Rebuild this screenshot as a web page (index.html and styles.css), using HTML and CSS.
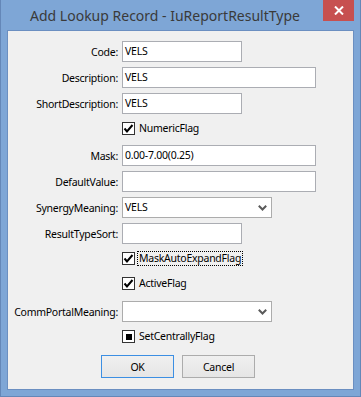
FILE: index.html
```html
<!DOCTYPE html>
<html lang="en">
  <head>
    <meta charset="UTF-8" />
    <title>Add Lookup Record - IuReportResultType</title>
    <link rel="stylesheet" href="styles.css">
  </head>
  <body>
    <div class="window">
      <div class="titlebar">
        <div class="title">Add Lookup Record - IuReportResultType</div>
        <div class="close">
          <svg width="10" height="9" viewBox="0 0 10 9">
            <path d="M1 0.5 L9 8.5 M9 0.5 L1 8.5" stroke="#fff" stroke-width="2" fill="none" />
          </svg>
        </div>
      </div>

      <div class="client">
        <div class="form">
          <div class="row">
            <span class="label">Code:</span>
            <div class="field short">VELS</div>
          </div>
          <div class="row">
            <span class="label">Description:</span>
            <div class="field long">VELS</div>
          </div>
          <div class="row">
            <span class="label">ShortDescription:</span>
            <div class="field short">VELS</div>
          </div>
          <div class="row check-row mt-8">
            <span class="box">
              <svg width="11" height="11" viewBox="0 0 11 11">
                <path d="M1.5 5.5 L4 8.5 L9.5 2" stroke="#000" stroke-width="2" fill="none" />
              </svg>
            </span>
            <span class="check-label">NumericFlag</span>
          </div>
          <div class="row mt-10">
            <span class="label">Mask:</span>
            <div class="field long">0.00-7.00(0.25)</div>
          </div>
          <div class="row">
            <span class="label">DefaultValue:</span>
            <div class="field long"></div>
          </div>
          <div class="row">
            <span class="label">SynergyMeaning:</span>
            <div class="field combo">
              <span>VELS</span>
              <svg class="arrow" width="9" height="6" viewBox="0 0 9 6">
                <path d="M0.8 0.8 L4.5 4.5 L8.2 0.8" stroke="#5a5a5a" stroke-width="2" fill="none" />
              </svg>
            </div>
          </div>
          <div class="row">
            <span class="label">ResultTypeSort:</span>
            <div class="field short"></div>
          </div>
          <div class="row check-row mt-8">
            <span class="box">
              <svg width="11" height="11" viewBox="0 0 11 11">
                <path d="M1.5 5.5 L4 8.5 L9.5 2" stroke="#000" stroke-width="2" fill="none" />
              </svg>
            </span>
            <span class="check-label focused">MaskAutoExpandFlag</span>
          </div>
          <div class="row check-row mt-12">
            <span class="box">
              <svg width="11" height="11" viewBox="0 0 11 11">
                <path d="M1.5 5.5 L4 8.5 L9.5 2" stroke="#000" stroke-width="2" fill="none" />
              </svg>
            </span>
            <span class="check-label">ActiveFlag</span>
          </div>
          <div class="row mt-11">
            <span class="label">CommPortalMeaning:</span>
            <div class="field combo">
              <span></span>
              <svg class="arrow" width="9" height="6" viewBox="0 0 9 6">
                <path d="M0.8 0.8 L4.5 4.5 L8.2 0.8" stroke="#5a5a5a" stroke-width="2" fill="none" />
              </svg>
            </div>
          </div>
          <div class="row check-row mt-8">
            <span class="box"><span class="mixed"></span></span>
            <span class="check-label">SetCentrallyFlag</span>
          </div>
        </div>

        <div class="buttons">
          <button class="btn default">OK</button>
          <button class="btn">Cancel</button>
        </div>
      </div>
    </div>
  </body>
</html>
```

FILE: styles.css
```css
* {
  box-sizing: border-box;
  margin: 0;
  padding: 0;
}

body {
  width: 361px;
  height: 397px;
  background-color: #7ea6d6;
  font-family: "Noto Sans", "Open Sans", Arial, sans-serif;
  font-size: 10.5px;
  letter-spacing: -0.25px;
  color: #000;
}

.window {
  width: 361px;
  height: 397px;
  background-color: #7ea6d6;
  border: 1px solid #6487b8;
  border-top: none;
  padding: 0 6px 6px 6px;
  display: flex;
  flex-direction: column;
}

.titlebar {
  height: 30px;
  display: flex;
  align-items: flex-start;
}

.title {
  flex: 1;
  text-align: center;
  font-size: 14px;
  letter-spacing: 0;
  line-height: 31px;
  color: #3a3a3a;
  white-space: nowrap;
}

.close {
  width: 31px;
  height: 21px;
  background-color: #c75050;
  display: flex;
  justify-content: center;
  align-items: center;
}

.client {
  flex: 1;
  background-color: #f0f0f0;
  border: 1px solid #6b8fc1;
}

.form {
  padding-top: 10px;
}

.row {
  display: flex;
  align-items: center;
  height: 21px;
  margin-top: 5px;
}

.row:first-child {
  margin-top: 0;
}

.row.check-row {
  height: 13px;
  padding-left: 114px;
}

.mt-8 { margin-top: 8px; }
.mt-10 { margin-top: 10px; }
.mt-11 { margin-top: 11px; }
.mt-12 { margin-top: 12px; }

.label {
  width: 110px;
  margin-right: 4px;
  text-align: right;
  white-space: nowrap;
}

.field {
  height: 21px;
  background: #fff;
  border: 1px solid #abadb3;
  padding: 0 2px;
  line-height: 19px;
  white-space: nowrap;
}

.field.short {
  width: 120px;
}

.field.long {
  width: 194px;
}

.field.combo {
  width: 150px;
  border-color: #acacac;
  display: flex;
  align-items: center;
  justify-content: space-between;
  padding-right: 4px;
}

.box {
  width: 13px;
  height: 13px;
  border: 1px solid #333;
  background: #fff;
  display: flex;
  justify-content: center;
  align-items: center;
  flex-shrink: 0;
}

.box svg {
  display: block;
}

.mixed {
  width: 6px;
  height: 6px;
  background: #000;
}

.check-label {
  margin-left: 2px;
  padding: 0 1px;
  border: 1px solid transparent;
  line-height: 13px;
  white-space: nowrap;
}

.check-label.focused {
  border: 1px dotted #000;
}

.buttons {
  display: flex;
  gap: 8px;
  padding-left: 93px;
  margin-top: 12px;
}

.btn {
  width: 73px;
  height: 23px;
  border: 1px solid #acacac;
  background: linear-gradient(to bottom, #f0f0f0, #e5e5e5);
  font-family: inherit;
  font-size: 10.5px;
  letter-spacing: -0.25px;
  color: #000;
}

.btn.default {
  border-color: #3c8fe3;
}
```
